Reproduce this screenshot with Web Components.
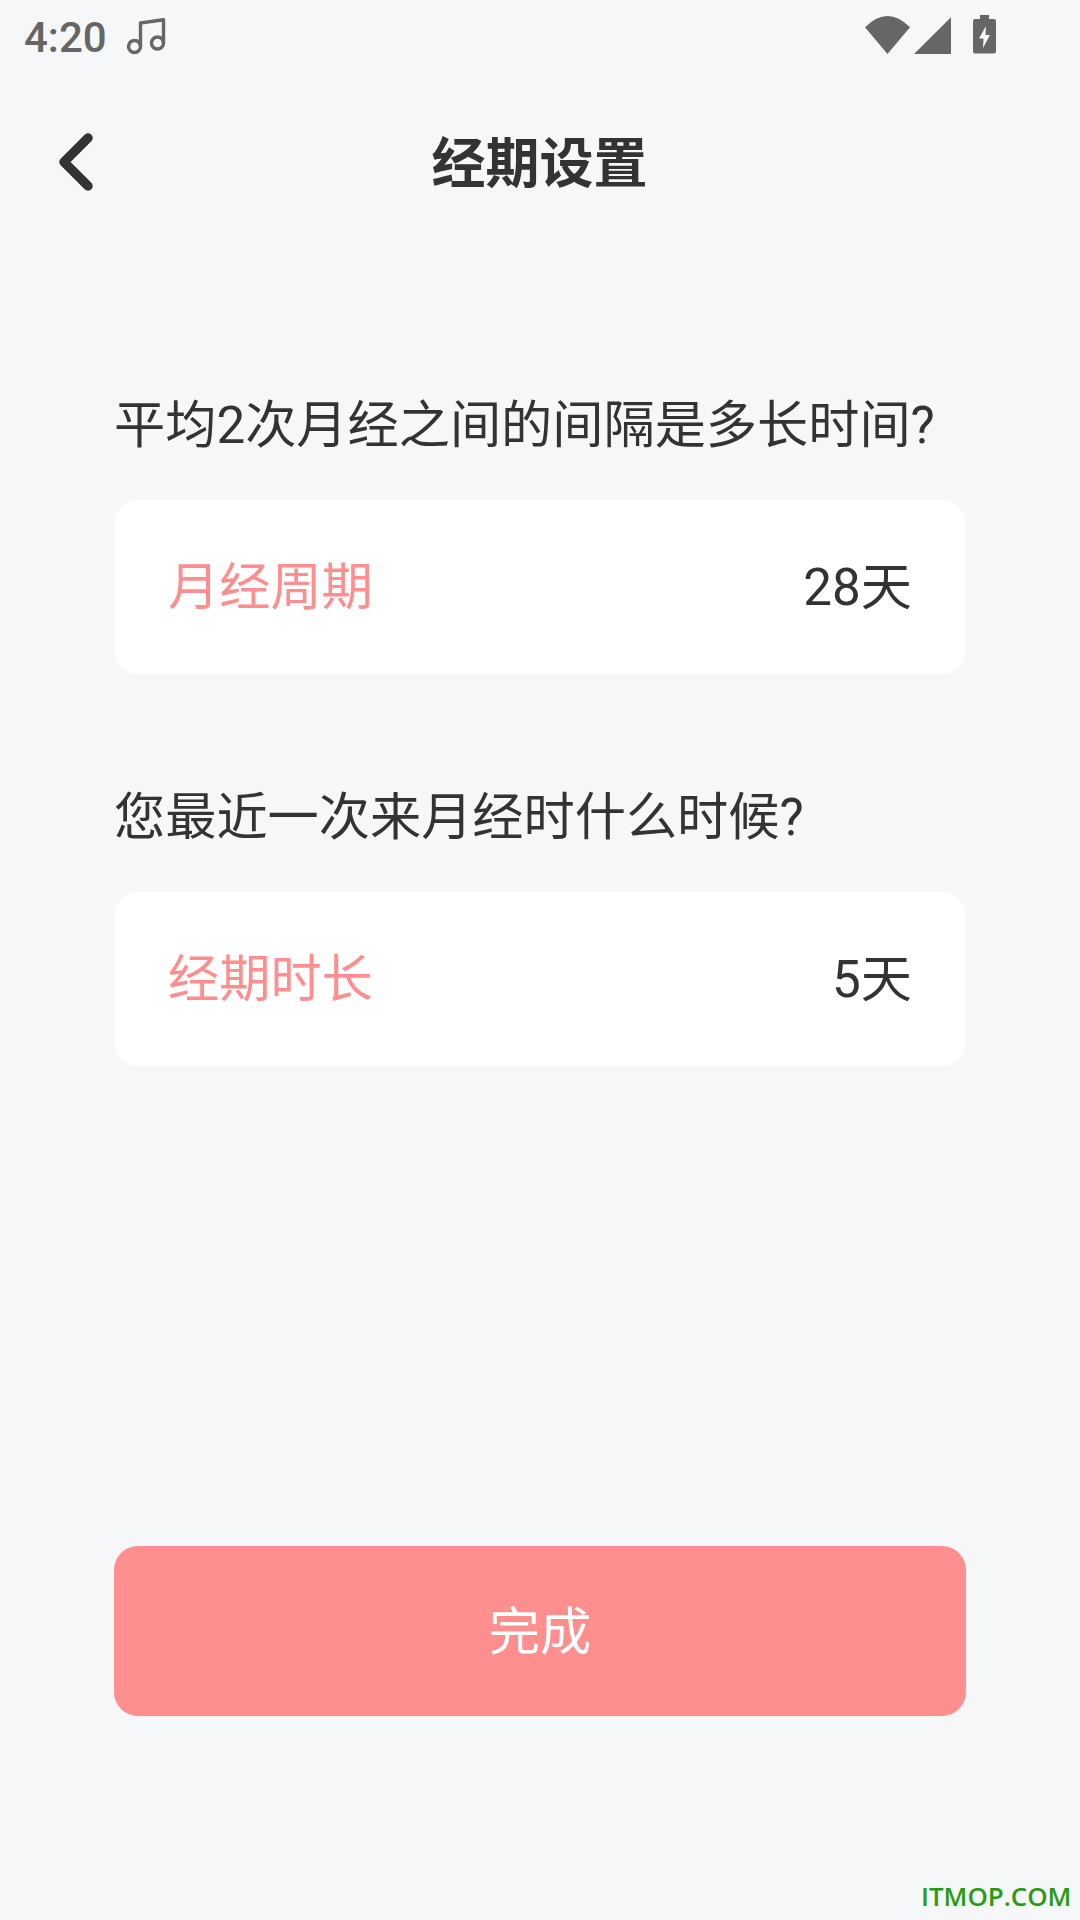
<!DOCTYPE html>
<html lang="zh-CN"><head><meta charset="utf-8">
<style>
html,body{margin:0;padding:0;background:#f6f7f9}
body{width:1080px;height:1920px;overflow:hidden;font-family:Roboto,"Noto Sans CJK SC",sans-serif}
</style></head><body>
<period-app></period-app>
<script>
const def=(name,html)=>customElements.define(name,class extends HTMLElement{
  constructor(){super();const t=document.createElement('template');t.innerHTML=html;this.attachShadow({mode:'open'}).appendChild(t.content.cloneNode(true));}
});
def('status-bar',`<style>
:host{display:flex;align-items:flex-start;height:72px;padding:15px 84px 0 24px;box-sizing:border-box;color:#666}
.t{font:500 42px/42px Roboto,sans-serif;color:#666;margin-top:2px}
.music{margin-left:18px}
.r{margin-left:auto;display:flex;align-items:flex-start}
svg{display:block}
</style>
<span class="t">4:20</span>
<svg class="music" width="42" height="42" viewBox="0 0 42 42" fill="none" stroke="#666" stroke-width="3.4"><circle cx="9.500" cy="31.500" r="6"/><circle cx="32.500" cy="28" r="6"/><path d="M15.500 31.500V8L38.500 4.800V28" stroke-linejoin="round"/></svg>
<span class="r">
<svg width="86" height="40" viewBox="0 0 86 40" fill="#666"><path d="M0 12.300Q22.500 -10.300 45 12.300L22.500 39Z"/><path d="M49 39L86 2.300V39Z"/></svg>
<svg style="margin-left:22px" width="23" height="39" viewBox="0 0 23 39"><path d="M7 0H16V4H21Q23 4 23 6V36.500Q23 38.500 21 38.500H2Q0 38.500 0 36.500V6Q0 4 2 4H7Z" fill="#666"/><path d="M13 11L6 23.500H10.500L10 33L17 20H12.500Z" fill="#f6f7f9"/></svg>
</span>`);
def('nav-bar',`<style>
:host{display:block;position:relative;height:108px;text-align:center;font:700 54px/108px "Noto Sans CJK SC",sans-serif;color:#333}
svg{position:absolute;left:57px;top:58px}
span{display:block;margin-right:1px;padding-top:34px;height:74px;line-height:108px}
</style>
<svg width="38" height="64" viewBox="0 0 38 64" fill="none" stroke="#333" stroke-width="9.500" stroke-linecap="round" stroke-linejoin="round"><path d="M31 8L7 32L31 56"/></svg>
<span><slot></slot></span>`);
def('field-row',`<style>
:host{display:flex;justify-content:space-between;align-items:center;height:174px;background:#fff;border-radius:24px;padding:2px 54px 0;box-sizing:border-box;font:400 51.200px/1 Roboto,"Noto Sans CJK SC",sans-serif;color:#333}
.l{color:#ff8e8e}
</style>
<span class="l"><slot name="label"></slot></span><span><slot></slot></span>`);
def('question-block',`<style>
:host{display:block}
.q{font:400 51.200px/72px Roboto,"Noto Sans CJK SC",sans-serif;color:#333;margin-bottom:38px;white-space:nowrap}
</style>
<div class="q"><slot name="q"></slot></div><slot></slot>`);
def('primary-button',`<style>
:host{display:flex;align-items:center;justify-content:center;height:170px;box-sizing:border-box;padding-bottom:4px;background:#ff8e8e;border-radius:24px;color:#fff;font:400 51.200px/1 "Noto Sans CJK SC",sans-serif}
</style><slot></slot>`);
def('period-app',`<style>
:host{display:block;position:relative;width:1080px;height:1920px;background:#f6f7f9}
main{padding:0 114px;display:flex;flex-direction:column}
.b1{margin-top:210px}.b2{margin-top:108px}
primary-button{margin-top:480px}
.wm{position:absolute;left:921px;top:1881px;font:600 25.900px/1.2 "Open Sans",sans-serif;color:#2a9a12;white-space:nowrap}
</style>
<status-bar></status-bar>
<nav-bar>经期设置</nav-bar>
<main>
<question-block class="b1"><span slot="q">平均2次月经之间的间隔是多长时间?</span>
<field-row><span slot="label">月经周期</span>28天</field-row></question-block>
<question-block class="b2"><span slot="q">您最近一次来月经时什么时候?</span>
<field-row><span slot="label">经期时长</span>5天</field-row></question-block>
<primary-button>完成</primary-button>
</main>
<div class="wm">ITMOP.COM</div>`);
</script>
</body></html>
